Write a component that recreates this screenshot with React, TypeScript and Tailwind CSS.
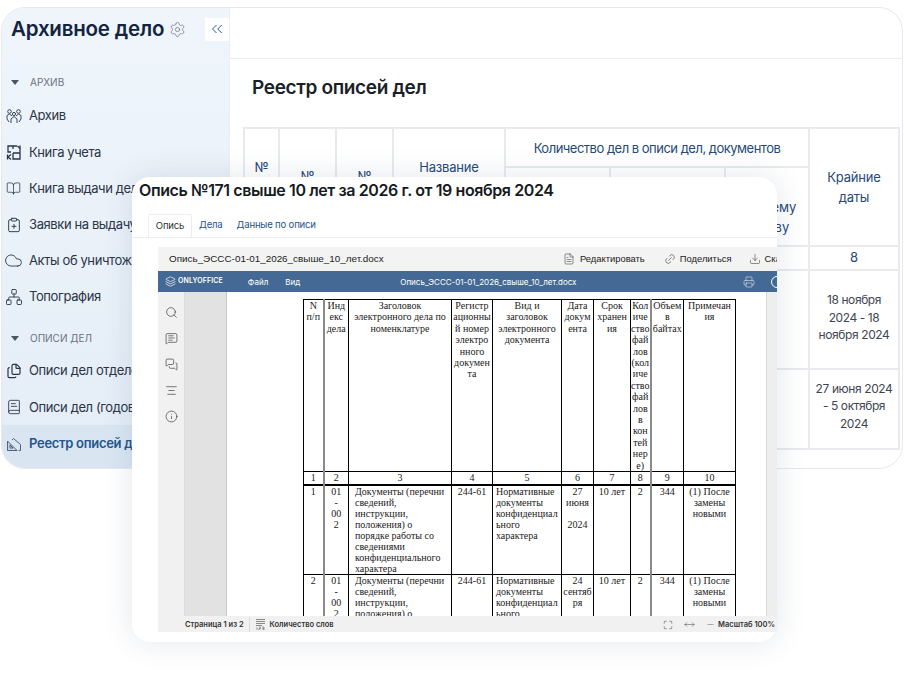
import {
  BookOpen,
  BookText,
  ChevronsLeft,
  ClipboardPlus,
  Cloud,
  Files,
  FileText,
  Info,
  Link2,
  MessageSquareText,
  MessagesSquare,
  Network,
  Printer,
  Search,
  Settings,
  Maximize,
  MoveHorizontal,
  Minus,
  TextAlignCenter,
  Download,
  Layers,
} from 'lucide-react';
import type { ReactNode } from 'react';

const inter = 'font-[Inter,"Noto_Sans",sans-serif]';

function PeopleIcon() {
  return (
    <svg width="16" height="16" viewBox="0 0 16 16" fill="none" stroke="#3c4658" strokeWidth="1">
      <circle cx="3.5" cy="3.5" r="1.8" />
      <circle cx="12.5" cy="3.5" r="1.8" />
      <circle cx="8" cy="6" r="1.6" />
      <path d="M1 11V7.5l2.5-1.5L6 8M15 11V7.5L12.5 6 10 8M5 15v-4l3-2.5 3 2.5v4M1 11l2 3M15 11l-2 3" />
    </svg>
  );
}

function LedgerIcon() {
  return (
    <svg width="16" height="16" viewBox="0 0 16 16" fill="none" stroke="#2b3444" strokeWidth="1.3">
      <path d="M7 5V2h4M7 2H2v6h3M7 9h7V1.5M14 9v6H7V9" />
      <path d="M1.5 10.5v5M5 10.5l-3 2.5 3 2.5M11.5 2l2.5 2.5" />
    </svg>
  );
}

function RegistryIcon() {
  return (
    <svg width="16" height="16" viewBox="0 0 16 16" fill="#c3d6e8" stroke="#52637a" strokeWidth="1">
      <path d="M1.5 14.5V5l9.5 9.5zM4 12V9l3 3z" />
      <path d="M6 4l1.5-1.5 7 6v6h-2" fill="none" />
    </svg>
  );
}

function WordCountIcon() {
  return (
    <svg width="9" height="11" viewBox="0 0 9 11" fill="none" stroke="#444" strokeWidth="0.6">
      <path d="M0 .5h9M0 2.5h9M0 4.5h9M0 6.5h6" />
      <path d="M1 8v3M3 8h1.5v1.5H3V11h1.5M6 8h2v3H6M6.5 9.5H8" strokeWidth="0.5" />
    </svg>
  );
}

const archiveItems: { label: string; icon: ReactNode }[] = [
  { label: 'Архив', icon: <PeopleIcon /> },
  { label: 'Книга учета', icon: <LedgerIcon /> },
  { label: 'Книга выдачи дел', icon: <BookOpen size={15} strokeWidth={1.2} /> },
  { label: 'Заявки на выдачу', icon: <ClipboardPlus size={16} strokeWidth={1.4} /> },
  { label: 'Акты об уничтожении', icon: <Cloud size={19} strokeWidth={1.1} /> },
  { label: 'Топография', icon: <Network size={18} strokeWidth={1.2} /> },
];

const opisItems: { label: string; icon: ReactNode }[] = [
  { label: 'Описи дел отделов', icon: <Files size={16} strokeWidth={1.8} /> },
  { label: 'Описи дел (годовые)', icon: <BookText size={16} strokeWidth={1.3} /> },
];

function NavRow({ label, icon }: { label: string; icon: ReactNode }) {
  return (
    <div className="flex h-[36.2px] items-center whitespace-nowrap text-[13px] tracking-[-0.4px] text-[#2b3444]">
      <span className="flex w-[27px] shrink-0 justify-center pr-[4px] text-[#2b3444]">{icon}</span>
      {label}
    </div>
  );
}

function SectionLabel({ children }: { children: string }) {
  return (
    <div className="flex items-center text-[10px] text-[#6b7280]">
      <span className="ml-[9px] mr-[11px] h-0 w-0 border-x-[4.5px] border-t-[5px] border-x-transparent border-t-[#4b5563]" />
      {children}
    </div>
  );
}

function Sidebar() {
  return (
    <aside className="flex w-[227px] shrink-0 flex-col overflow-hidden bg-gradient-to-b from-[#eff5fb] to-[#e4edf7]">
      <div className="flex h-[42px] items-center pl-[9px] pt-[1px]">
        <span className="text-[20.5px] font-semibold tracking-[-0.2px] text-[#142341]">Архивное дело</span>
        <Settings size={17} strokeWidth={1} className="ml-[5px] text-[#6b7280]" />
        <span className="ml-auto flex h-[23px] w-[24px] items-center justify-center bg-white">
          <ChevronsLeft size={18} strokeWidth={1.3} className="text-[#25558e]" />
        </span>
      </div>
      <div className="mt-[26px]">
        <SectionLabel>АРХИВ</SectionLabel>
      </div>
      <div className="mt-[7.5px]">
        {archiveItems.map((item) => (
          <NavRow key={item.label} {...item} />
        ))}
      </div>
      <div className="mt-[16px]">
        <SectionLabel>ОПИСИ ДЕЛ</SectionLabel>
      </div>
      <div className="mt-[7px]">
        {opisItems.map((item) => (
          <NavRow key={item.label} {...item} />
        ))}
      </div>
      <div className="flex h-[43px] items-center whitespace-nowrap bg-[#d9e6f2] pb-[6px] text-[13px] font-semibold tracking-[-0.3px] text-[#25558e]">
        <span className="flex w-[27px] shrink-0 justify-center pr-[4px]">
          <RegistryIcon />
        </span>
        Реестр описей дел
      </div>
    </aside>
  );
}

const th = 'border-2 border-[#e8eaed] text-center font-normal align-middle text-[#25497a]';

function RegistryTable() {
  return (
    <table className="w-[656px] table-fixed border-collapse text-[13px] leading-[20px]">
      <colgroup>
        <col className="w-[35px]" />
        <col className="w-[57px]" />
        <col className="w-[57px]" />
        <col className="w-[112px]" />
        <col className="w-[105px]" />
        <col className="w-[115px]" />
        <col className="w-[84px]" />
        <col className="w-[90px]" />
      </colgroup>
      <tbody>
        <tr className="h-[39px]">
          <th rowSpan={2} className={`${th} pb-[20px]`}>№<br />п/п</th>
          <th rowSpan={2} className={`${th} pb-[22px]`}>№</th>
          <th rowSpan={2} className={`${th} pb-[22px]`}>№</th>
          <th rowSpan={2} className={`${th} pb-[20px] tracking-[-0.2px]`}>Название<br />описи</th>
          <th colSpan={3} className={`${th} tracking-[-0.5px]`}>Количество дел в описи дел, документов</th>
          <th rowSpan={2} className={`${th} tracking-[-0.2px]`}>Крайние<br />даты</th>
        </tr>
        <tr className="h-[79px]">
          <th className={th} />
          <th className={th} />
          <th className={`${th} pt-[20px]`}>по всему<br />архиву</th>
        </tr>
        <tr className="h-[23px]">
          {['1', '2', '3', '4', '5', '6', '7', '8'].map((n) => (
            <td key={n} className={`${th} pb-[2px]`}>{n}</td>
          ))}
        </tr>
        <tr className="h-[99px] text-[#404651]">
          <td colSpan={7} className="border-2 border-[#e8eaed]" />
          <td className="border-2 border-[#e8eaed] px-[3px] pb-[4px] text-center text-[12px] leading-[17.5px] tracking-[-0.4px]">18 ноября 2024 - 18 ноября 2024</td>
        </tr>
        <tr className="h-[80px] text-[#404651]">
          <td colSpan={7} className="border-2 border-[#e8eaed]" />
          <td className="border-2 border-[#e8eaed] px-[3px] pb-[6px] text-center text-[12px] leading-[17.5px] tracking-[-0.4px]">27 июня 2024 - 5 октября 2024</td>
        </tr>
      </tbody>
    </table>
  );
}

const docHead = [
  ['N', 'п/п'],
  ['Инд', 'екс', 'дела'],
  ['Заголовок', 'электронного дела по', 'номенклатуре'],
  ['Регистр', 'ационны', 'й номер', 'электро', 'нного', 'докумен', 'та'],
  ['Вид и', 'заголовок', 'электронного', 'документа'],
  ['Дата', 'докум', 'ента'],
  ['Срок', 'хранен', 'ия'],
  ['Кол', 'иче', 'ство', 'фай', 'лов', '(кол', 'иче', 'ство', 'фай', 'лов', 'в', 'кон', 'тей', 'нер', 'е)'],
  ['Объем', 'в', 'байтах'],
  ['Примечан', 'ия'],
];

const docRow = (n: string, date: string[], lines: string[], kind: string[]) => [
  { lines: [n], pad: '' },
  { lines: ['01', '-', '00', '2'], pad: '' },
  { lines, pad: 'pl-[6px] text-left' },
  { lines: ['244-61'], pad: '' },
  { lines: kind, pad: 'pl-[3px] text-left' },
  { lines: date, pad: '' },
  { lines: ['10 лет'], pad: '' },
  { lines: ['2'], pad: '' },
  { lines: ['344'], pad: '' },
  { lines: ['(1) После', 'замены', 'новыми'], pad: '' },
];

const rows = [
  docRow(
    '1',
    ['27', 'июня', '\u00a0', '2024'],
    ['Документы (перечни', 'сведений,', 'инструкции,', 'положения) о', 'порядке работы со', 'сведениями', 'конфиденциального', 'характера'],
    ['Нормативные', 'документы', 'конфиденциал', 'ьного', 'характера'],
  ),
  docRow(
    '2',
    ['24', 'сентяб', 'ря'],
    ['Документы (перечни', 'сведений,', 'инструкции,', 'положения) о', 'порядке работы со'],
    ['Нормативные', 'документы', 'конфиденциал', 'ьного', 'характера'],
  ),
];

const dc = 'border border-black px-0 align-top text-center';
const greyRight = (i: number) => (i === 0 || i === 7 ? 'border-r-2 border-r-[#8a8a8a]' : '');

function DocTable() {
  return (
    <table className="w-[432px] table-fixed border-collapse font-['Liberation_Serif',serif] text-[10px] leading-[11.4px] text-[#1a1a1a]">
      <colgroup>
        <col className="w-[20px]" />
        <col className="w-[25px]" />
        <col className="w-[103px]" />
        <col className="w-[41px]" />
        <col className="w-[69px]" />
        <col className="w-[32px]" />
        <col className="w-[37px]" />
        <col className="w-[20px]" />
        <col className="w-[33px]" />
        <col className="w-[52px]" />
      </colgroup>
      <tbody>
        <tr className="h-[172px]">
          {docHead.map((lines, i) => (
            <td key={i} className={`${dc} ${greyRight(i)}`}>
              {lines.map((l) => (
                <div key={l}>{l}</div>
              ))}
            </td>
          ))}
        </tr>
        <tr className="h-[12px] border-b-2 border-black">
          {docHead.map((_, i) => (
            <td key={i} className={`${dc} ${greyRight(i)}`}>{i + 1}</td>
          ))}
        </tr>
        {rows.map((cells, r) => (
          <tr key={r} className="h-[87px]">
            {cells.map((c, i) => (
              <td key={i} className={`${dc} ${greyRight(i)} leading-[11px] ${c.pad}`}>
                {c.lines.map((l, k) => (
                  <div key={k} className="whitespace-nowrap">{l}</div>
                ))}
              </td>
            ))}
          </tr>
        ))}
      </tbody>
    </table>
  );
}

function Viewer() {
  return (
    <div className="ml-[26px] mt-[9px] flex h-[385px] w-[619px] flex-col overflow-hidden">
      <div className="flex h-[24px] shrink-0 items-center whitespace-nowrap bg-[#f3f3f3] pl-[11px] font-['Liberation_Sans',sans-serif] text-[9.4px] text-[#222]">
        <span className="w-[394px] shrink-0 text-[9.9px]">Опись_ЭССС-01-01_2026_свыше_10_лет.docx</span>
        <span className="flex shrink-0 items-center">
          <FileText size={12} strokeWidth={1} className="mr-[5px] shrink-0" />Редактировать
        </span>
        <span className="ml-[19px] flex shrink-0 items-center">
          <Link2 size={12} strokeWidth={1} className="mr-[4px] shrink-0 -rotate-45" />Поделиться
        </span>
        <span className="ml-[17px] flex shrink-0 items-center">
          <Download size={12} strokeWidth={1} className="mr-[4px] shrink-0" />Скачать
        </span>
      </div>
      <div className="flex h-[21px] shrink-0 items-center whitespace-nowrap bg-[#446995] pl-[7px] text-[8px] text-white">
        <Layers size={11} strokeWidth={1.5} className="mr-[2px] shrink-0" />
        <span className="text-[7px] font-semibold tracking-[0.1px]">ONLYOFFICE</span>
        <span className="ml-[25px]">Файл</span>
        <span className="ml-[17px]">Вид</span>
        <span className="ml-[100px]">Опись_ЭССС-01-01_2026_свыше_10_лет.docx</span>
        <Printer size={12} strokeWidth={1} className="ml-[167px] shrink-0" />
        <span className="ml-[16px] h-[12px] w-[12px] shrink-0 rounded-full border border-white" />
      </div>
      <div className="flex min-h-0 flex-1">
        <div className="flex w-[27px] shrink-0 flex-col items-center gap-[13px] border-r border-[#dcdcdc] bg-[#f1f1f1] pt-[14px] text-[#333]">
          <Search size={13} strokeWidth={1.2} />
          <MessageSquareText size={13} strokeWidth={1.2} />
          <MessagesSquare size={13} strokeWidth={1.2} />
          <TextAlignCenter size={13} strokeWidth={1.2} />
          <Info size={13} strokeWidth={1.2} />
        </div>
        <div className="w-[42px] shrink-0 border-r border-[#c8c8c8] bg-[#e2e2e2]" />
        <div className="min-w-0 flex-1 overflow-hidden bg-white pl-[76px] pt-[7px]">
          <DocTable />
        </div>
        <div className="w-[11px] shrink-0 border-l border-[#d6d6d6] bg-[#eeeeee]" />
      </div>
      <div className="flex h-[16px] shrink-0 items-center whitespace-nowrap bg-[#f1f1f1] pl-[27px] pt-[1px] text-[7.5px] font-semibold text-[#333]">
        Страница 1 из 2
        <span className="ml-[5px] mr-[6px] h-full w-px bg-[#dddddd]" />
        <WordCountIcon />
        <span className="ml-[5px]">Количество слов</span>
        <span className="ml-auto flex items-center pr-[2px]">
          <Maximize size={10} strokeWidth={1.2} className="shrink-0" />
          <MoveHorizontal size={11} strokeWidth={1} className="ml-[11px] shrink-0" />
          <Minus size={9} strokeWidth={1} className="ml-[11px] mr-[3px] shrink-0" />
          Масштаб 100%
        </span>
      </div>
    </div>
  );
}

export default function App() {
  return (
    <div className={`relative h-[680px] w-[904px] overflow-hidden bg-white ${inter}`}>
      <div className="mx-[1px] mt-[7px] flex h-[462px] overflow-hidden rounded-[24px] border border-[#e6e8eb] bg-white">
        <Sidebar />
        <main className="min-w-0 flex-1 border-l border-[#eceef0]">
          <div className="h-[51px] border-b border-[#eceef0]" />
          <h1 className="ml-[22px] mt-[16px] text-[19px] font-semibold leading-[26px] tracking-[-0.35px] text-[#1b1f27]">Реестр описей дел</h1>
          <div className="ml-[13px] mt-[26px]">
            <RegistryTable />
          </div>
        </main>
      </div>

      <div className="absolute left-[132px] top-[177px] h-[465px] w-[645px] rounded-[18px] bg-white pt-[3px] shadow-[0_0_30px_rgba(60,80,110,0.14)]">
        <h2 className="whitespace-nowrap pl-[7px] text-[16px] font-semibold leading-[20px] tracking-[-0.4px] text-[#161a22]">
          Опись №171 свыше 10 лет за 2026 г. от 19 ноября 2024
        </h2>
        <div className="mt-[15px] flex h-[23px] items-end whitespace-nowrap border-b border-[#eeeeee] pl-[16px] text-[9.6px] tracking-[-0.2px]">
          <span className="flex h-[23px] w-[44px] items-center justify-center rounded-t-[2px] border-x border-t border-[#eeeeee] bg-white text-[#333]">Опись</span>
          <span className="flex h-[23px] items-center pl-[7px] text-[#25558e]">Дела</span>
          <span className="flex h-[23px] items-center pl-[14px] text-[#25558e]">Данные по описи</span>
        </div>
        <Viewer />
      </div>
    </div>
  );
}
